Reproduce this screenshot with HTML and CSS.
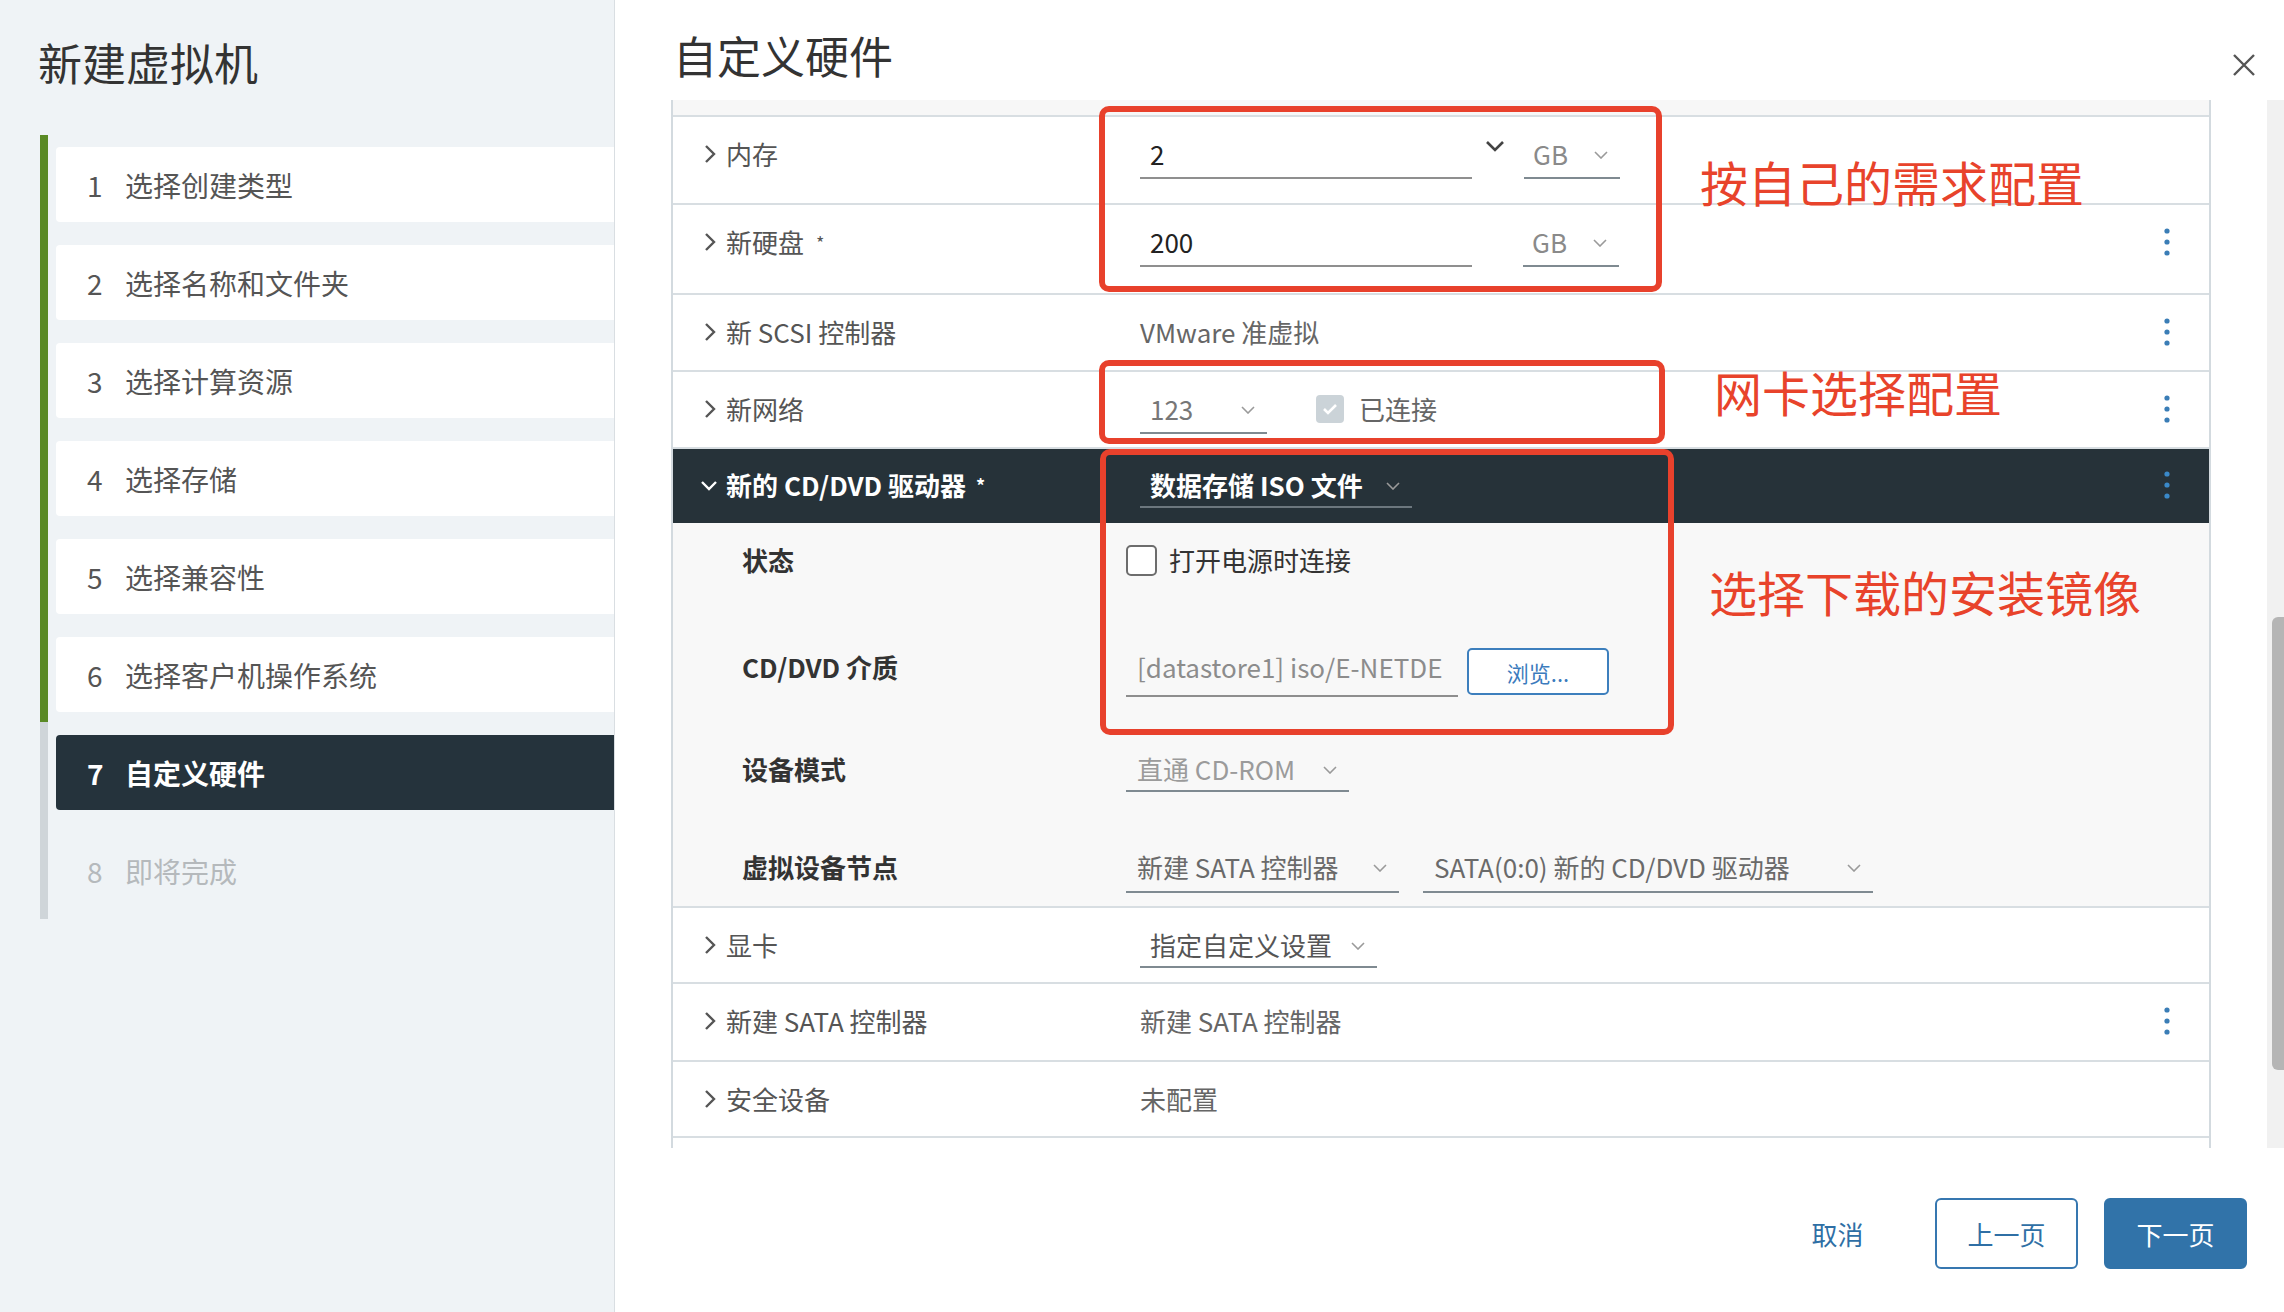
FILE: index.html
```html
<!DOCTYPE html>
<html>
  <head>
    <meta charset="utf-8">
    <title>新建虚拟机 - 自定义硬件</title>
    <link rel="stylesheet" href="styles.css">
  </head>
  <body>
    <div class="app">
      <aside class="sidebar">
        <h1 class="side-title">新建虚拟机</h1>
        <div class="steps">
          <div class="steps-bar"></div>
          <ol class="step-list">
            <li class="step"><span class="step-num">1</span>选择创建类型</li>
            <li class="step"><span class="step-num">2</span>选择名称和文件夹</li>
            <li class="step"><span class="step-num">3</span>选择计算资源</li>
            <li class="step"><span class="step-num">4</span>选择存储</li>
            <li class="step"><span class="step-num">5</span>选择兼容性</li>
            <li class="step"><span class="step-num">6</span>选择客户机操作系统</li>
            <li class="step active"><span class="step-num">7</span>自定义硬件</li>
            <li class="step todo"><span class="step-num">8</span>即将完成</li>
          </ol>
        </div>
      </aside>

      <main class="main">
        <header class="main-head">
          <h2 class="main-title">自定义硬件</h2>
          <button class="close" aria-label="关闭">
            <svg width="24" height="24" viewBox="0 0 24 24"><path d="M2 2 L22 22 M22 2 L2 22" /></svg>
          </button>
        </header>

        <div class="content">
          <div class="hw-table">
            <div class="hw-peek"></div>

            <div class="row h88">
              <div class="row-label"><svg class="chev" width="12" height="20" viewBox="0 0 12 20"><path d="M2 2 L10 10 L2 18" /></svg>内存</div>
              <div class="row-value">
                <div class="field w-num"><span class="val">2</span></div>
                <svg class="spin" width="20" height="12" viewBox="0 0 20 12"><path d="M2 2 L10 10 L18 2" /></svg>
                <div class="select w-unit"><span>GB</span><svg class="sel-chev" width="14" height="8" viewBox="0 0 14 8"><path d="M1 1 L7 7 L13 1" /></svg></div>
              </div>
              <div class="row-actions"></div>
            </div>

            <div class="row h90">
              <div class="row-label"><svg class="chev" width="12" height="20" viewBox="0 0 12 20"><path d="M2 2 L10 10 L2 18" /></svg>新硬盘 <sup>*</sup></div>
              <div class="row-value">
                <div class="field w-num"><span class="val">200</span></div>
                <div class="select w-unit unit-2"><span>GB</span><svg class="sel-chev" width="14" height="8" viewBox="0 0 14 8"><path d="M1 1 L7 7 L13 1" /></svg></div>
              </div>
              <div class="row-actions"><svg class="dots" width="6" height="28" viewBox="0 0 6 28"><circle cx="3" cy="3" r="2.6" /><circle cx="3" cy="14" r="2.6" /><circle cx="3" cy="25" r="2.6" /></svg></div>
            </div>

            <div class="row h77">
              <div class="row-label"><svg class="chev" width="12" height="20" viewBox="0 0 12 20"><path d="M2 2 L10 10 L2 18" /></svg>新 SCSI 控制器</div>
              <div class="row-value"><span class="plain">VMware 准虚拟</span></div>
              <div class="row-actions"><svg class="dots" width="6" height="28" viewBox="0 0 6 28"><circle cx="3" cy="3" r="2.6" /><circle cx="3" cy="14" r="2.6" /><circle cx="3" cy="25" r="2.6" /></svg></div>
            </div>

            <div class="row h77">
              <div class="row-label"><svg class="chev" width="12" height="20" viewBox="0 0 12 20"><path d="M2 2 L10 10 L2 18" /></svg>新网络</div>
              <div class="row-value">
                <div class="select w-net"><span>123</span><svg class="sel-chev" width="14" height="8" viewBox="0 0 14 8"><path d="M1 1 L7 7 L13 1" /></svg></div>
                <span class="check-dis"><svg width="16" height="12" viewBox="0 0 16 12"><path d="M2 6 L6 10 L14 2" /></svg></span>
                <span class="check-text">已连接</span>
              </div>
              <div class="row-actions"><svg class="dots" width="6" height="28" viewBox="0 0 6 28"><circle cx="3" cy="3" r="2.6" /><circle cx="3" cy="14" r="2.6" /><circle cx="3" cy="25" r="2.6" /></svg></div>
            </div>

            <div class="row open-head">
              <div class="row-label"><svg class="chev-down" width="18" height="11" viewBox="0 0 18 11"><path d="M2 2 L9 9 L16 2" /></svg>新的 CD/DVD 驱动器 <sup>*</sup></div>
              <div class="row-value">
                <div class="select w-iso"><span>数据存储 ISO 文件</span><svg class="sel-chev" width="14" height="8" viewBox="0 0 14 8"><path d="M1 1 L7 7 L13 1" /></svg></div>
              </div>
              <div class="row-actions"><svg class="dots" width="6" height="28" viewBox="0 0 6 28"><circle cx="3" cy="3" r="2.6" /><circle cx="3" cy="14" r="2.6" /><circle cx="3" cy="25" r="2.6" /></svg></div>
            </div>

            <div class="detail">
              <div class="sub s1">
                <div class="sub-label">状态</div>
                <div class="sub-value">
                  <span class="check-box"></span>
                  <span class="check-label">打开电源时连接</span>
                </div>
              </div>
              <div class="sub s2">
                <div class="sub-label">CD/DVD 介质</div>
                <div class="sub-value">
                  <div class="field w-iso-path"><span class="path">[datastore1] iso/E-NETDE</span></div>
                  <button class="browse">浏览...</button>
                </div>
              </div>
              <div class="sub s3">
                <div class="sub-label">设备模式</div>
                <div class="sub-value">
                  <div class="select sub-sel w-mode"><span>直通 CD-ROM</span><svg class="sel-chev" width="14" height="8" viewBox="0 0 14 8"><path d="M1 1 L7 7 L13 1" /></svg></div>
                </div>
              </div>
              <div class="sub s4">
                <div class="sub-label">虚拟设备节点</div>
                <div class="sub-value">
                  <div class="select sub-sel node w-ctrl"><span>新建 SATA 控制器</span><svg class="sel-chev" width="14" height="8" viewBox="0 0 14 8"><path d="M1 1 L7 7 L13 1" /></svg></div>
                  <div class="select sub-sel node w-port"><span>SATA(0:0) 新的 CD/DVD 驱动器</span><svg class="sel-chev" width="14" height="8" viewBox="0 0 14 8"><path d="M1 1 L7 7 L13 1" /></svg></div>
                </div>
              </div>
            </div>

            <div class="row h76">
              <div class="row-label"><svg class="chev" width="12" height="20" viewBox="0 0 12 20"><path d="M2 2 L10 10 L2 18" /></svg>显卡</div>
              <div class="row-value">
                <div class="select w-gpu"><span>指定自定义设置</span><svg class="sel-chev" width="14" height="8" viewBox="0 0 14 8"><path d="M1 1 L7 7 L13 1" /></svg></div>
              </div>
              <div class="row-actions"></div>
            </div>

            <div class="row h78">
              <div class="row-label"><svg class="chev" width="12" height="20" viewBox="0 0 12 20"><path d="M2 2 L10 10 L2 18" /></svg>新建 SATA 控制器</div>
              <div class="row-value"><span class="plain">新建 SATA 控制器</span></div>
              <div class="row-actions"><svg class="dots" width="6" height="28" viewBox="0 0 6 28"><circle cx="3" cy="3" r="2.6" /><circle cx="3" cy="14" r="2.6" /><circle cx="3" cy="25" r="2.6" /></svg></div>
            </div>

            <div class="row h76">
              <div class="row-label"><svg class="chev" width="12" height="20" viewBox="0 0 12 20"><path d="M2 2 L10 10 L2 18" /></svg>安全设备</div>
              <div class="row-value"><span class="plain">未配置</span></div>
              <div class="row-actions"></div>
            </div>

            <div class="row h76"></div>
          </div>

          <div class="scrollbar"><div class="thumb"></div></div>
        </div>

        <footer class="footer">
          <button class="btn btn-flat">取消</button>
          <button class="btn btn-outline">上一页</button>
          <button class="btn btn-primary">下一页</button>
        </footer>
      </main>

      <!-- red annotations drawn over the screenshot -->
      <div class="mark mark-1"></div>
      <div class="mark mark-2"></div>
      <div class="mark mark-3"></div>
      <div class="note note-1">按自己的需求配置</div>
      <div class="note note-2">网卡选择配置</div>
      <div class="note note-3">选择下载的安装镜像</div>
    </div>
  </body>
</html>
```

FILE: styles.css
```css
* { box-sizing: border-box; }
body { margin: 0; font-family: "Noto Sans CJK SC", "Noto Sans", sans-serif; color: #565656; background: #fff; }
button { font-family: inherit; cursor: pointer; }

.app { position: relative; display: flex; width: 2284px; height: 1312px; overflow: hidden; }

/* wizard steps */
.sidebar { flex: none; width: 615px; background: #eff3f6; border-right: 1px solid #d9dee2; }
.side-title { margin: 0 0 50px; padding: 39px 0 0 38px; font-size: 44px; line-height: 46px; font-weight: 400; color: #333; }
.steps { display: flex; height: 784px; margin-left: 40px; }
.steps-bar { width: 8px; background: linear-gradient(#5a8a25 0, #5a8a25 587px, #cfd5d9 587px); }
.step-list { flex: 1; display: flex; flex-direction: column; gap: 23px; list-style: none; margin: 0; padding: 12px 0 11px 8px; }
.step { display: flex; align-items: center; height: 75px; padding-left: 31px; background: #fff; border-radius: 4px 0 0 4px; font-size: 28px; color: #555; }
.step-num { width: 38px; }
.step.active { background: #25333c; color: #fff; font-weight: 700; }
.step.todo { background: none; color: #b5b9bc; }

/* main panel */
.main { flex: 1; display: flex; flex-direction: column; min-width: 0; }
.main-head { display: flex; align-items: flex-start; height: 100px; padding-left: 58px; }
.main-title { margin: 33px 0 0; font-size: 44px; line-height: 44px; font-weight: 400; color: #333; }
.close { margin: 53px 28px 0 auto; padding: 0; width: 24px; height: 24px; border: none; background: none; }
.close svg { display: block; }
.close path { stroke: #555; stroke-width: 2.4; fill: none; }

.content { display: flex; height: 1048px; padding-left: 56px; }
.hw-table { width: 1540px; border-left: 2px solid #d3dadf; border-right: 2px solid #d3dadf; overflow: hidden; }
.scrollbar { width: 17px; margin-left: auto; padding: 517px 0 0 5px; background: #f1f1f1; }
.thumb { height: 453px; background: #b5b5b5; border-radius: 6px 0 0 6px; }

.hw-peek { height: 17px; background: #f7f7f7; border-bottom: 2px solid #d8dee2; }

.row { display: flex; align-items: flex-start; padding-top: 19px; border-bottom: 2px solid #d8dee2; font-size: 26px; line-height: 36px; background: #fff; }
.h76 { height: 76px; }
.h77 { height: 77px; }
.h78 { height: 78px; }
.h88 { height: 88px; }
.h90 { height: 90px; }
.row-label { flex: none; display: flex; align-items: center; gap: 10px; width: 467px; padding-left: 31px; color: #555; white-space: nowrap; }
.row-label sup { font-size: 18px; line-height: 0; margin-left: 2px; vertical-align: 8px; }
.row-value { flex: 1; display: flex; align-items: flex-start; white-space: nowrap; }
.row-actions { flex: none; display: flex; align-items: center; justify-content: center; width: 84px; height: 36px; }
.chev path, .chev-down path { fill: none; stroke: #555; stroke-width: 2.4; }
.dots { fill: #3a7db6; }
.plain { color: #666; }

/* inputs and selects */
.field { height: 43px; padding-left: 10px; border-bottom: 2px solid #8f8f8f; overflow: hidden; }
.val { color: #222; }
.w-num { width: 332px; }
.spin { margin: 4px 0 0 13px; }
.spin path { fill: none; stroke: #444; stroke-width: 2.6; }
.select { display: flex; align-items: flex-start; justify-content: space-between; height: 43px; padding: 0 12px 0 10px; border-bottom: 2px solid #7f8a91; color: #666; }
.sel-chev { margin-top: 15px; }
.sel-chev path { fill: none; stroke: #9a9a9a; stroke-width: 1.6; }
.w-unit { width: 96px; margin-left: 19px; padding-left: 9px; color: #8a8a8a; }
.unit-2 { margin-left: 51px; }
.w-net { width: 127px; color: #777; }
.w-gpu { width: 237px; color: #555; height: 41px; }

.check-dis { display: flex; align-items: center; justify-content: center; width: 28px; height: 28px; margin: 4px 0 0 49px; background: #cbd3d8; border-radius: 4px; }
.check-dis path { fill: none; stroke: #fff; stroke-width: 2.6; }
.check-text { margin-left: 15px; color: #666; }

/* expanded CD/DVD block */
.open-head { height: 74px; padding-top: 18px; background: #263239; border-bottom: none; color: #fff; font-weight: 700; }
.open-head .row-label { padding-left: 27px; gap: 8px; color: #fff; }
.open-head .chev-down path { stroke: #fff; }
.w-iso { width: 272px; height: 41px; color: #fff; border-bottom-color: #6c777e; }
.open-head .dots { fill: #3a89c9; }

.detail { height: 385px; background: #f8f8f8; border-bottom: 2px solid #d8dee2; }
.sub { display: flex; align-items: flex-start; padding-top: 19px; font-size: 26px; line-height: 36px; }
.s1 { height: 107px; }
.s2 { height: 102px; }
.s3 { height: 98px; }
.s4 { height: 76px; }
.sub-label { flex: none; width: 453px; padding-left: 69px; font-weight: 700; color: #333; }
.sub-value { display: flex; align-items: flex-start; white-space: nowrap; }
.check-box { width: 31px; height: 31px; margin-top: 3px; border: 2px solid #6d6d6d; border-radius: 5px; background: #fff; }
.check-label { margin-left: 12px; color: #333; }
.w-iso-path { width: 332px; height: 48px; padding: 0 8px 0 11px; border-bottom-color: #8e8e8e; color: #8c8c8c; }
.browse { width: 142px; height: 47px; margin: -1px 0 0 9px; border: 2px solid #3d7fbd; border-radius: 5px; background: #fff; color: #3b7bbd; font-size: 22px; }
.sub-sel { height: 41px; padding-left: 11px; color: #9b9b9b; }
.w-mode { width: 223px; }
.node { height: 44px; color: #6a6a6a; }
.w-ctrl { width: 273px; }
.w-port { width: 450px; margin-left: 24px; }

/* footer */
.footer { flex: 1; display: flex; justify-content: flex-end; align-items: flex-start; gap: 26px; padding: 50px 37px 0 0; }
.btn { width: 143px; height: 71px; border: 2px solid transparent; border-radius: 6px; background: none; color: #2f6fa5; font-size: 26px; }
.btn-outline { border-color: #3677b0; background: #fff; }
.btn-primary { background: #3173a9; border-color: #3173a9; color: #fff; }

/* annotations */
.mark { position: absolute; border: 6px solid #e8412c; border-radius: 10px; }
.mark-1 { left: 1099px; top: 106px; width: 563px; height: 186px; }
.mark-2 { left: 1099px; top: 360px; width: 566px; height: 84px; }
.mark-3 { left: 1100px; top: 449px; width: 574px; height: 286px; }
.note { position: absolute; font-size: 48px; line-height: 48px; color: #e8432b; white-space: nowrap; }
.note-1 { left: 1700px; top: 157px; }
.note-2 { left: 1714px; top: 367px; }
.note-3 { left: 1709px; top: 567px; }
```
